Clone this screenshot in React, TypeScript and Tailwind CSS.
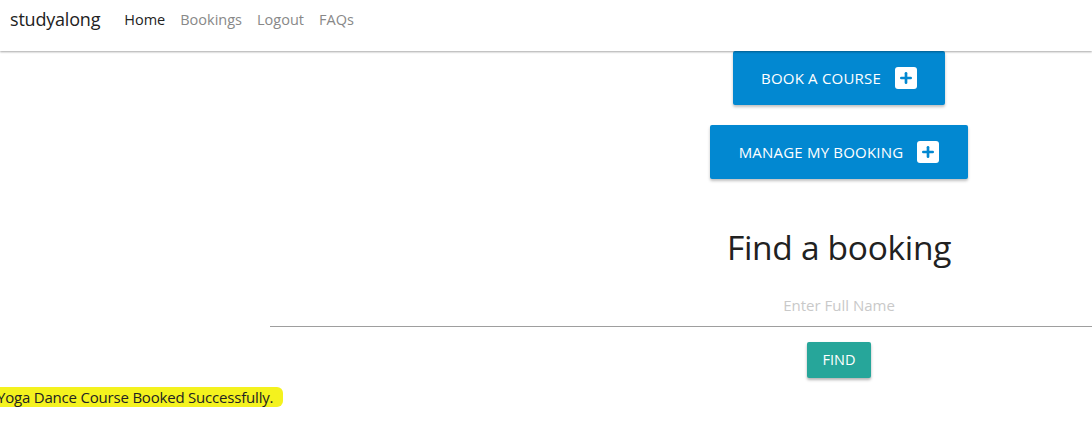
import { Plus } from 'lucide-react';

function PlusBox() {
  return (
    <span className="ml-[14px] flex h-[22px] w-[22px] items-center justify-center rounded-[3px] bg-white">
      <Plus className="h-[16px] w-[16px] text-[#0288d1]" strokeWidth={4} />
    </span>
  );
}

export default function App() {
  const font = { fontFamily: '"Open Sans", "Noto Sans", sans-serif' };

  return (
    <div className="relative h-[445px] w-[1092px] overflow-hidden bg-white text-[#212121]" style={font}>
      {/* Navbar */}
      <nav className="relative z-10 flex h-[51px] items-center bg-white shadow-[0_1px_2px_rgba(0,0,0,0.35)]">
        <span className="ml-[10px] mt-[-12px] text-[18px] tracking-[-0.2px] text-[#222]">studyalong</span>
        <ul className="ml-[24px] mt-[-12px] flex gap-[15px] text-[14.5px]">
          <li className="text-[#222]">Home</li>
          <li className="text-[#888]">Bookings</li>
          <li className="text-[#888]">Logout</li>
          <li className="text-[#888]">FAQs</li>
        </ul>
      </nav>

      {/* Main column */}
      <div className="ml-[270px] flex w-[1138px] flex-col items-center">
        <button className="flex h-[54px] w-[212px] items-center justify-center rounded-[2px] bg-[#0288d1] text-[15px] tracking-[0.2px] text-white shadow-[0_2px_3px_rgba(0,0,0,0.25)]">
          BOOK A COURSE
          <PlusBox />
        </button>
        <button className="mt-[20px] flex h-[54px] w-[258px] items-center justify-center rounded-[2px] bg-[#0288d1] text-[15px] tracking-[0.2px] text-white shadow-[0_2px_3px_rgba(0,0,0,0.25)]">
          MANAGE MY BOOKING
          <PlusBox />
        </button>

        <h2 className="mt-[46px] text-[33.5px] leading-[44px] tracking-[-0.3px] text-[#212121]">Find a booking</h2>

        <div className="mt-[26px] flex h-[32px] w-full items-start justify-center border-b border-[#9e9e9e] text-[15px] leading-[20px] text-[#c9c9c9]">
          Enter Full Name
        </div>

        <button className="mt-[15px] flex h-[36px] w-[64px] items-center justify-center rounded-[2px] bg-[#26a69a] text-[14.5px] text-white shadow-[0_2px_3px_rgba(0,0,0,0.3)]">
          FIND
        </button>
      </div>

      {/* Flash message */}
      <div className="ml-[-7px] mt-[9px] inline-block rounded-[6px] bg-[#f4f21e] pl-[4px] pr-[10px] text-[15px] leading-[20px] tracking-[-0.2px] text-[#222]">
        Yoga Dance Course Booked Successfully.
      </div>
    </div>
  );
}
